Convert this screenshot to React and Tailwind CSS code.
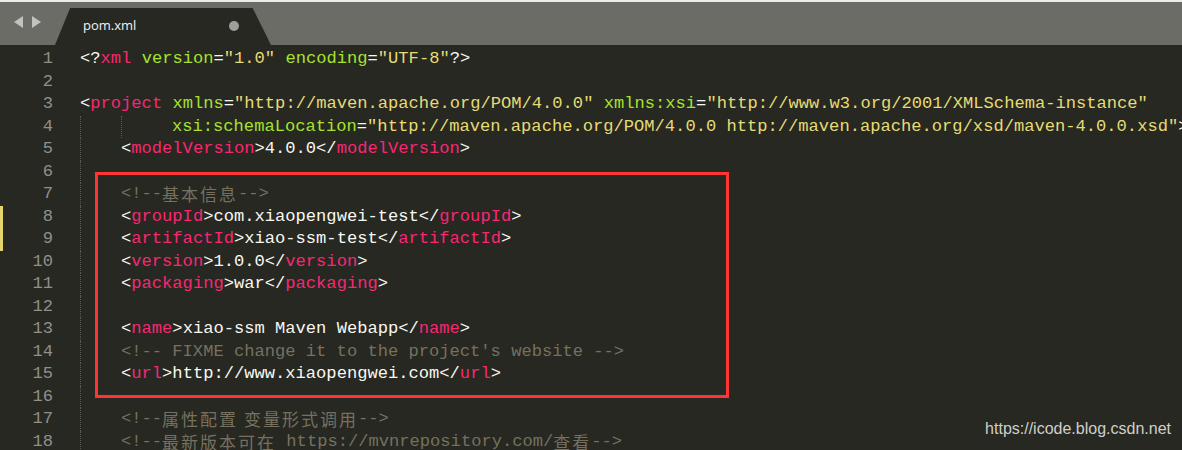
import React from 'react';

const P = 'text-[#f8f8f2]';
const T = 'text-[#f92672]';
const A = 'text-[#a6e22e]';
const S = 'text-[#e6db74]';
const C = 'text-[#75715e]';

// each line: indent guides count, extra leading chars, tokens
const lines = [
    { g: 0, t: [[P, '<?'], [T, 'xml'], [A, ' version'], [P, '='], [S, '"1.0"'], [A, ' encoding'], [P, '='], [S, '"UTF-8"'], [P, '?>']] },
    { g: 0, t: [] },
    { g: 0, t: [[P, '<'], [T, 'project'], [A, ' xmlns'], [P, '='], [S, '"http://maven.apache.org/POM/4.0.0"'], [A, ' xmlns:xsi'], [P, '='], [S, '"http://www.w3.org/2001/XMLSchema-instance"']] },
    { g: 2, pad: true, t: [[A, 'xsi:schemaLocation'], [P, '='], [S, '"http://maven.apache.org/POM/4.0.0 http://maven.apache.org/xsd/maven-4.0.0.xsd"'], [P, '>']] },
    { g: 1, t: [[P, '<'], [T, 'modelVersion'], [P, '>4.0.0</'], [T, 'modelVersion'], [P, '>']] },
    { g: 1, t: [] },
    { g: 1, t: [[C, '<!--'], ['cjk ' + C, '基本信息'], [C, '-->']] },
    { g: 1, mark: true, t: [[P, '<'], [T, 'groupId'], [P, '>com.xiaopengwei-test</'], [T, 'groupId'], [P, '>']] },
    { g: 1, mark: true, t: [[P, '<'], [T, 'artifactId'], [P, '>xiao-ssm-test</'], [T, 'artifactId'], [P, '>']] },
    { g: 1, t: [[P, '<'], [T, 'version'], [P, '>1.0.0</'], [T, 'version'], [P, '>']] },
    { g: 1, t: [[P, '<'], [T, 'packaging'], [P, '>war</'], [T, 'packaging'], [P, '>']] },
    { g: 1, t: [] },
    { g: 1, t: [[P, '<'], [T, 'name'], [P, '>xiao-ssm Maven Webapp</'], [T, 'name'], [P, '>']] },
    { g: 1, t: [[C, "<!-- FIXME change it to the project's website -->"]] },
    { g: 1, t: [[P, '<'], [T, 'url'], [P, '>http://www.xiaopengwei.com</'], [T, 'url'], [P, '>']] },
    { g: 1, t: [] },
    { g: 1, t: [[C, '<!--'], ['cjk ' + C, '属性配置 变量形式调用'], [C, '-->']] },
    { g: 1, t: [[C, '<!--'], ['cjk ' + C, '最新版本可在'], [C, ' https://mvnrepository.com/'], ['cjk ' + C, '查看'], [C, '-->']] },
];

const Guide = () => (
    <span className="inline-block w-[41px] h-[22.5px] align-top border-l border-dotted border-[#5a5a52]" />
);

export default function App() {
    return (
        <div className="relative w-[1182px] h-[450px] overflow-hidden bg-[#272822]">
            <div className="h-[2px] bg-[#ececec]" />
            {/* Tab bar */}
            <div className="h-[43px] bg-[#6c6c67] flex items-end">
                <div className="w-[55px] h-full flex items-center justify-center gap-[9px] pb-[3px]">
                    <svg width="9" height="12" viewBox="0 0 9 12"><path d="M9 0 L0 6 L9 12 Z" fill="#c2c2be" /></svg>
                    <svg width="9" height="12" viewBox="0 0 9 12"><path d="M0 0 L9 6 L0 12 Z" fill="#c2c2be" /></svg>
                </div>
                <div className="relative w-[216px] h-[37px] bg-[#272822] [clip-path:polygon(7%_0,91.5%_0,100%_100%,0_100%)] flex items-center pl-[28px] pb-[2px]">
                    <span className="text-[13px] text-[#f2f2f2] font-['Open_Sans',sans-serif]">pom.xml</span>
                    <span className="ml-auto mr-[32px] w-[10px] h-[10px] rounded-full bg-[#9e9e9a]" />
                </div>
            </div>

            {/* Editor */}
            <div className="pt-[3px] font-['Liberation_Mono',monospace] text-[17.13px] leading-[22.5px] whitespace-pre">
                {lines.map((ln, i) => (
                    <div key={i} className="flex h-[22.5px]">
                        <div className={`w-[80px] shrink-0 flex ${ln.mark ? 'border-l-[3px] border-[#e3d46d]' : ''}`}>
                            <span className={`${ln.mark ? 'w-[50px]' : 'w-[53px]'} text-right text-[#8f908a]`}>{i + 1}</span>
                        </div>
                        <div className="flex">
                            {Array.from({ length: ln.g }).map((_, k) => <Guide key={k} />)}
                            {ln.pad && <span className="inline-block w-[10px]" />}
                            {ln.t.map(([cls, txt], k) => (
                                <span
                                    key={k}
                                    className={cls.startsWith('cjk')
                                        ? `${cls.slice(4)} font-['Noto_Sans_CJK_SC',sans-serif] text-[17px] tracking-[2px]`
                                        : cls}
                                >
                                    {txt}
                                </span>
                            ))}
                        </div>
                    </div>
                ))}
            </div>

            {/* Highlight box */}
            <div className="absolute left-[95px] top-[172px] w-[634px] h-[226px] border-[3px] border-[#ff3434]" />

            {/* Watermark */}
            <div className="absolute right-[11px] bottom-[9px] text-[16px] text-[#cfcfca] font-['Liberation_Sans',sans-serif]">
                https://icode.blog.csdn.net
            </div>
        </div>
    );
}
